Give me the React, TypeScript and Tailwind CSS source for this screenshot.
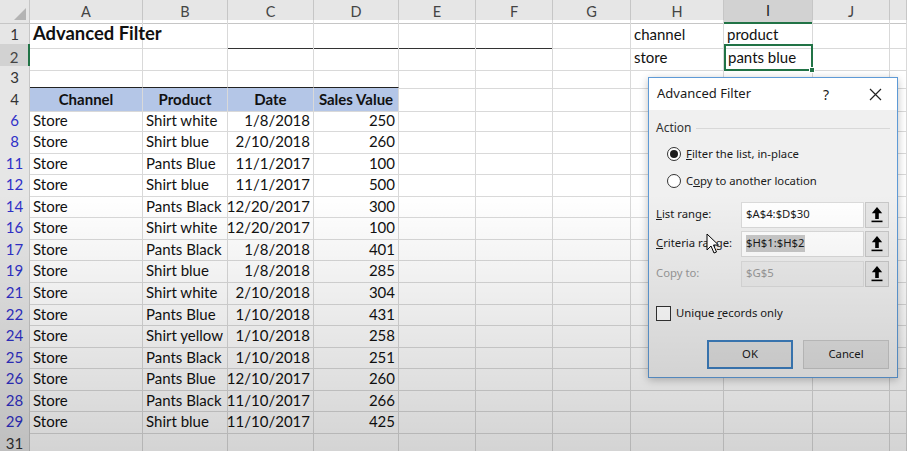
import React from "react";

const GRID =
  "grid grid-cols-[30px_113px_85px_86px_85px_77px_77px_78px_93px_89px_77px_1fr]";

const data = [
  ["6", "Store", "Shirt white", "1/8/2018", "250"],
  ["8", "Store", "Shirt blue", "2/10/2018", "260"],
  ["11", "Store", "Pants Blue", "11/1/2017", "100"],
  ["12", "Store", "Shirt blue", "11/1/2017", "500"],
  ["14", "Store", "Pants Black", "12/20/2017", "300"],
  ["16", "Store", "Shirt white", "12/20/2017", "100"],
  ["17", "Store", "Pants Black", "1/8/2018", "401"],
  ["19", "Store", "Shirt blue", "1/8/2018", "285"],
  ["21", "Store", "Shirt white", "2/10/2018", "304"],
  ["22", "Store", "Pants Blue", "1/10/2018", "431"],
  ["24", "Store", "Shirt yellow", "1/10/2018", "258"],
  ["25", "Store", "Pants Black", "1/10/2018", "251"],
  ["26", "Store", "Pants Blue", "12/10/2017", "260"],
  ["28", "Store", "Pants Black", "11/10/2017", "266"],
  ["29", "Store", "Shirt blue", "11/10/2017", "425"],
];

const letters = ["A", "B", "C", "D", "E", "F", "G", "H", "I", "J", ""];

function Cell({
  children,
  className = "",
}: {
  children?: React.ReactNode;
  className?: string;
}) {
  return (
    <div
      className={`flex items-center overflow-visible whitespace-nowrap border-r border-b border-[#d9d9d9] px-[3px] ${className}`}
    >
      {children}
    </div>
  );
}

function RowHead({ n, blue, active }: { n: string; blue?: boolean; active?: boolean }) {
  return (
    <div
      className={`flex items-center justify-center border-b border-[#c6c6c6] text-[15px] ${
        active
          ? "border-r-2 border-r-[#217346] bg-[#d2d2d2] text-[#444]"
          : "border-r bg-[#e6e6e6]"
      } ${blue ? "text-[#3030c8]" : active ? "" : "text-[#333]"}`}
    >
      {n}
    </div>
  );
}

function UpBtn() {
  return (
    <div className="flex h-[26px] w-[24px] items-center justify-center border border-[#c8c8c8] bg-[#e6e6e6]">
      <svg width="12" height="17" viewBox="0 0 12 17">
        <path d="M6 1 L0.8 7.2 H4.2 V13 H7.8 V7.2 H11.2 Z" fill="#000" />
        <rect x="0.5" y="14.6" width="11" height="1.6" fill="#000" />
      </svg>
    </div>
  );
}

function Dialog() {
  return (
    <div className="absolute left-[648px] top-[77px] flex h-[301px] w-[250px] flex-col border border-[#5e9ad6] bg-[#f0f0f0] font-['Noto_Sans',sans-serif] text-[11.3px] text-[#1a1a1a] shadow-[0_2px_8px_rgba(0,0,0,0.25)]">
      <div className="flex h-[32px] items-center bg-white pl-[8px]">
        <span className="text-[13px]">Advanced Filter</span>
        <span className="ml-auto mr-[40px] text-[14px]">?</span>
        <svg width="13" height="13" viewBox="0 0 13 13" className="mr-[15px]">
          <path d="M1 1 L12 12 M12 1 L1 12" stroke="#222" strokeWidth="1.2" />
        </svg>
      </div>
      <div className="flex flex-col px-[7px]">
        <div className="mt-[9px] flex items-center gap-[4px]">
          <span className="text-[12px] text-[#333]">Action</span>
          <div className="h-px flex-1 bg-[#d8d8d8]" />
        </div>
        <div className="mt-[9px] flex items-center pl-[11px]">
          <div className="flex h-[14px] w-[14px] items-center justify-center rounded-full border border-[#333] bg-white">
            <div className="h-[8px] w-[8px] rounded-full bg-[#1a1a1a]" />
          </div>
          <span className="ml-[5px]">
            <span className="underline">F</span>ilter the list, in-place
          </span>
        </div>
        <div className="mt-[10px] flex items-center pl-[11px]">
          <div className="h-[14px] w-[14px] rounded-full border border-[#333] bg-white" />
          <span className="ml-[5px]">
            C<span className="underline">o</span>py to another location
          </span>
        </div>
        <div className="mt-[12px] flex items-center">
          <span className="w-[85px]">
            <span className="underline">L</span>ist range:
          </span>
          <div className="flex h-[26px] w-[123px] items-center border border-[#dadada] bg-white pl-[4px]">
            $A$4:$D$30
          </div>
          <div className="ml-[1px]">
            <UpBtn />
          </div>
        </div>
        <div className="mt-[3px] flex items-center">
          <span className="w-[85px]">
            <span className="underline">C</span>riteria range:
          </span>
          <div className="flex h-[26px] w-[123px] items-center border border-[#dadada] bg-white pl-[4px]">
            <span className="bg-[#c9c9c9]">$H$1:$H$2</span>
          </div>
          <div className="ml-[1px]">
            <UpBtn />
          </div>
        </div>
        <div className="mt-[4px] flex items-center text-[#9a9a9a]">
          <span className="w-[85px]">Copy to:</span>
          <div className="flex h-[26px] w-[123px] items-center border border-[#dcdcdc] bg-[#ececec] pl-[4px]">
            $G$5
          </div>
          <div className="ml-[1px]">
            <UpBtn />
          </div>
        </div>
        <div className="mt-[18px] flex items-center">
          <div className="h-[15px] w-[15px] border border-[#333] bg-white" />
          <span className="ml-[5px]">
            Unique <span className="underline">r</span>ecords only
          </span>
        </div>
        <div className="mt-[18px] flex justify-end gap-[10px] pr-[1px]">
          <div className="flex h-[29px] w-[86px] items-center justify-center border-2 border-[#3d7fc0] bg-[#e1e1e1]">
            OK
          </div>
          <div className="flex h-[29px] w-[86px] items-center justify-center border border-[#c8c8c8] bg-[#e1e1e1]">
            Cancel
          </div>
        </div>
      </div>
    </div>
  );
}

export default function App() {
  return (
    <div className="relative h-[451px] w-[907px] overflow-hidden bg-white font-['Lato',sans-serif] text-[15px] text-[#111]">
      {/* column header */}
      <div className={`${GRID} h-[20px] bg-[#e6e6e6] text-[14.5px] text-[#444]`}>
        <div className="relative border-r border-b border-[#c6c6c6]">
          <svg width="12" height="12" viewBox="0 0 12 12" className="absolute bottom-[3px] right-[3px]">
            <path d="M12 0 L12 12 L0 12 Z" fill="#b4b4b4" />
          </svg>
        </div>
        {letters.map((l) => (
          <div
            key={l || "k"}
            className={`flex items-center justify-center border-r border-[#c6c6c6] ${
              l === "I"
                ? "border-b-2 border-b-[#217346] bg-[#d2d2d2] text-[#222]"
                : "border-b"
            }`}
          >
            {l}
          </div>
        ))}
      </div>

      {/* row 1 */}
      <div className={`${GRID} h-[24px]`}>
        <RowHead n="1" />
        <Cell className="text-[18.4px] font-bold">Advanced Filter</Cell>
        <Cell />
        <Cell className="border-b-[#333]" />
        <Cell className="border-b-[#333]" />
        <Cell className="border-b-[#333]" />
        <Cell className="border-b-[#333]" />
        <Cell />
        <Cell>channel</Cell>
        <Cell>product</Cell>
        <Cell />
        <Cell />
      </div>

      {/* row 2 */}
      <div className={`${GRID} h-[21.55px]`}>
        <RowHead n="2" active />
        <Cell />
        <Cell />
        <Cell />
        <Cell />
        <Cell />
        <Cell />
        <Cell />
        <Cell>store</Cell>
        <div className="relative flex items-center border-2 border-[#217346] px-[2px]">
          pants blue
          <div className="absolute -bottom-[4px] -right-[4px] h-[6px] w-[6px] border border-white bg-[#217346]" />
        </div>
        <Cell />
        <Cell />
      </div>

      {/* row 3 */}
      <div className={`${GRID} h-[21.55px]`}>
        <RowHead n="3" />
        {letters.map((l) => (
          <Cell key={l || "k"} />
        ))}
      </div>

      {/* row 4 */}
      <div className={`${GRID} h-[21.55px]`}>
        <RowHead n="4" />
        <Cell className="justify-center border-t border-t-[#222] bg-[#b4c6e7] font-bold">Channel</Cell>
        <Cell className="justify-center border-t border-t-[#222] bg-[#b4c6e7] font-bold">Product</Cell>
        <Cell className="justify-center border-t border-t-[#222] bg-[#b4c6e7] font-bold">Date</Cell>
        <Cell className="justify-center border-t border-t-[#222] bg-[#b4c6e7] font-bold">Sales Value</Cell>
        {letters.slice(4).map((l) => (
          <Cell key={l || "k"} />
        ))}
      </div>

      {data.map((r) => (
        <div key={r[0]} className={`${GRID} h-[21.55px]`}>
          <RowHead n={r[0]} blue />
          <Cell>{r[1]}</Cell>
          <Cell>{r[2]}</Cell>
          <Cell className="justify-end">{r[3]}</Cell>
          <Cell className="justify-end">{r[4]}</Cell>
          {letters.slice(4).map((l) => (
            <Cell key={l || "k"} />
          ))}
        </div>
      ))}

      <div className={`${GRID} h-[21.55px]`}>
        <RowHead n="31" />
        {letters.map((l) => (
          <Cell key={l || "k"} />
        ))}
      </div>

      <Dialog />

      {/* mouse cursor */}
      <svg
        width="14"
        height="22"
        viewBox="0 0 14 22"
        className="absolute left-[706px] top-[233px]"
      >
        <path
          d="M1 1 L1 17 L5 13 L8 20 L10.5 19 L7.5 12 L12.5 12 Z"
          fill="#fff"
          stroke="#000"
          strokeWidth="1"
          strokeLinejoin="round"
        />
      </svg>

      {/* video vignette */}
      <div className="pointer-events-none absolute inset-0 bg-linear-to-b from-transparent from-43% to-black/[0.17]" />
    </div>
  );
}
